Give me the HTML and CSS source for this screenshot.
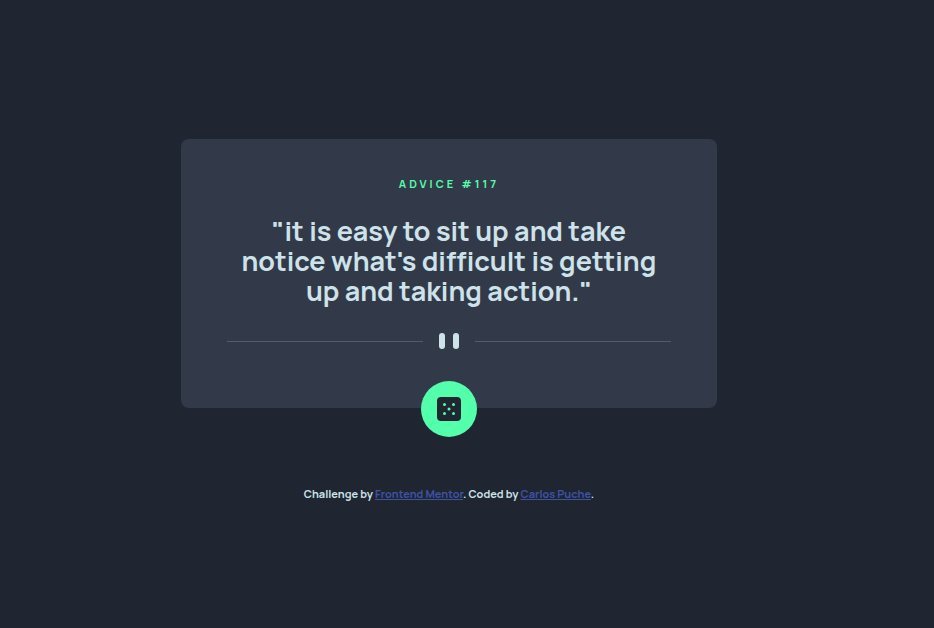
FILE: index.html
```html
<!DOCTYPE html>
<html lang="en">
<head>
<meta charset="utf-8">
<meta name="viewport" content="width=device-width, initial-scale=1">
<title>Advice generator</title>
<link rel="stylesheet" href="styles.css">
</head>
<body>
<main class="card">
  <h1 class="card-title">Advice #117</h1>
  <p class="quote">"it is easy to sit up and take notice what's difficult is getting up and taking action."</p>
  <svg class="divider" viewBox="0 0 444 16" aria-hidden="true">
    <path fill="#4f5d74" d="M0 8h196v1H0zM248 8h196v1H248z"/>
    <rect x="212" width="6" height="16" rx="3" fill="#cee3e9"/>
    <rect x="226" width="6" height="16" rx="3" fill="#cee3e9"/>
  </svg>
  <button class="dice" type="button" aria-label="New advice">
    <svg width="24" height="24" viewBox="0 0 24 24" aria-hidden="true">
      <path fill="#202733" d="M20 0H4a4 4 0 0 0-4 4v16a4 4 0 0 0 4 4h16a4 4 0 0 0 4-4V4a4 4 0 0 0-4-4ZM7.500 18a1.500 1.500 0 1 1 0-3 1.500 1.500 0 0 1 0 3Zm0-9a1.500 1.500 0 1 1 0-3 1.500 1.500 0 0 1 0 3Zm4.500 4.500a1.500 1.500 0 1 1 0-3 1.500 1.500 0 0 1 0 3Zm4.500 4.500a1.500 1.500 0 1 1 0-3 1.500 1.500 0 0 1 0 3Zm0-9a1.500 1.500 0 1 1 0-3 1.500 1.500 0 0 1 0 3Z"/>
    </svg>
  </button>
</main>
<footer class="attribution">
  Challenge by <a href="https://www.frontendmentor.io">Frontend Mentor</a>. Coded by <a href="#">Carlos Puche</a>.
</footer>
</body>
</html>
```
FILE: styles.css
```css
* {
  box-sizing: border-box;
}

body {
  min-height: 100vh;
  margin: 0;
  padding: 12px 36px 0 0;
  display: flex;
  flex-direction: column;
  align-items: center;
  justify-content: center;
  background: #1f2632;
  color: #cee3e9;
  font-family: Manrope, Inter, "Open Sans", sans-serif;
  font-variant-ligatures: none;
}

.card {
  width: 100%;
  max-width: 536px;
  padding: 39px 46px 0;
  display: flex;
  flex-direction: column;
  align-items: center;
  border-radius: 8px;
  background: #323a49;
  text-align: center;
}

.card-title {
  margin: 0;
  color: #53ffaa;
  font-size: 11px;
  line-height: 12px;
  font-weight: 700;
  letter-spacing: 3px;
  text-transform: uppercase;
}

.quote {
  max-width: 430px;
  margin: 26px 0 27px;
  font-size: 27px;
  line-height: 30px;
  font-weight: 700;
}

.divider {
  display: block;
  width: 100%;
}

.dice {
  width: 56px;
  height: 56px;
  margin: 32px 0 -29px;
  padding: 0;
  display: grid;
  place-items: center;
  border: 0;
  border-radius: 50%;
  background: #53ffaa;
  cursor: pointer;
}

.attribution {
  margin-top: 78px;
  font-size: 11px;
  line-height: 16px;
  font-weight: 700;
  text-align: center;
}

.attribution a {
  color: #3e52a3;
}
```
